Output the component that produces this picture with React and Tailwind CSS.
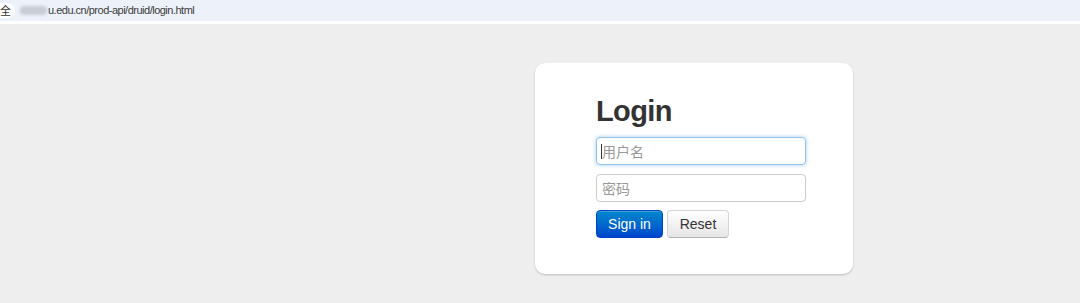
export default function App() {
  return (
    <div className="w-[1080px] h-[303px] bg-[#eeeeee] overflow-hidden flex flex-col" style={{ fontFamily: '"Liberation Sans", Arial, "Noto Sans CJK SC", sans-serif' }}>
      <div className="h-[21px] bg-[#edf1fa] flex items-center shrink-0">
        <div className="h-[15px] bg-white rounded-r-full pr-[4px] flex items-center text-[11px] text-[#333] leading-none -ml-[11px]" style={{ fontFamily: '"Noto Sans CJK SC", sans-serif' }}>
          安全
        </div>
        <div className="ml-[5px] w-[27px] h-[9px] bg-[#c8ccd4] blur-[1.5px] rounded-sm"></div>
        <div className="text-[11px] text-[#3c3c3c] leading-none ml-[1px] tracking-[-0.5px]">u.edu.cn/prod-api/druid/login.html</div>
      </div>
      <div className="h-[3px] bg-white shrink-0"></div>
      <div className="flex-1 relative">
        <div className="ml-[535px] mt-[39px] w-[318px] h-[211px] bg-white rounded-[10px] shadow-[0_1px_2px_rgba(0,0,0,0.2)] pl-[61px] pt-[28px]">
          <h2 className="text-[29px] font-bold text-[#333] leading-[40px] tracking-[-0.6px]">Login</h2>
          <div className="mt-[6px] w-[210px] h-[28px] border border-[#93c3ed] rounded-[4px] bg-white shadow-[0_0_4px_rgba(102,175,233,0.6)] flex items-center pl-[4px]">
            <span className="w-px h-[15px] bg-[#333]"></span>
            <span className="text-[14px] text-[#999] leading-none" style={{ fontFamily: '"Noto Sans CJK SC", sans-serif' }}>用户名</span>
          </div>
          <div className="mt-[9px] w-[210px] h-[28px] border border-[#cccccc] rounded-[4px] bg-white flex items-center pl-[5px]">
            <span className="text-[14px] text-[#999] leading-none" style={{ fontFamily: '"Noto Sans CJK SC", sans-serif' }}>密码</span>
          </div>
          <div className="mt-[8px] flex gap-[4px]">
            <button className="w-[67px] h-[28px] rounded-[4px] text-white text-[14px] bg-gradient-to-b from-[#0088cc] to-[#0044cc] border border-[#0044cc] shadow-[inset_0_1px_0_rgba(255,255,255,0.2)]">Sign in</button>
            <button className="w-[62px] h-[28px] rounded-[4px] text-[#333] text-[14px] bg-gradient-to-b from-white to-[#e6e6e6] border border-[#d4d4d4] border-b-[#b3b3b3]">Reset</button>
          </div>
        </div>
      </div>
    </div>
  );
}
